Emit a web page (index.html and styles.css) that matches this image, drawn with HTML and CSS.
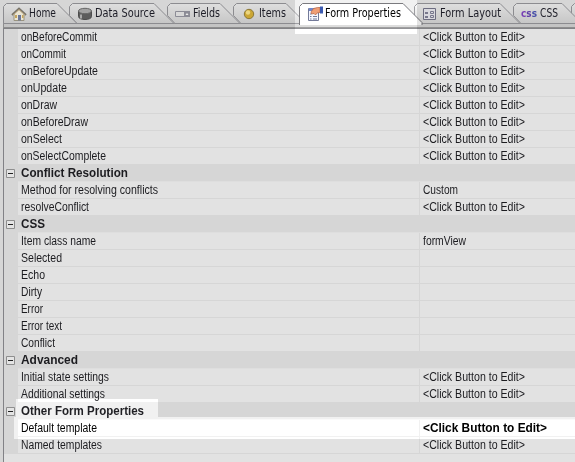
FILE: index.html
```
<!DOCTYPE html>
<html lang="en">
<head>
<meta charset="utf-8">
<title>Form Properties</title>
<link rel="stylesheet" href="styles.css">
</head>
<body>
<svg class="defs" width="0" height="0"><defs><linearGradient id="tabfill" x1="0" y1="0" x2="0" y2="1"><stop offset="0" stop-color="#dedede"/><stop offset="1" stop-color="#c6c6c6"/></linearGradient></defs></svg>
<nav class="tabs" id="tabs"></nav>
<main class="grid" id="grid"></main>
<div class="light light-tab"></div>
<div class="light light-group"></div>
<div class="light light-row"></div>
<script src="app.js"></script>
</body>
</html>
```
FILE: styles.css
```
* { box-sizing: border-box; }
body { margin: 0; width: 575px; height: 462px; overflow: hidden; background: #d6d6d6; font-family: "Liberation Sans", sans-serif; color: #1c1c20; }
.defs { position: absolute; }
.tabs { display: flex; height: 28px; padding-left: 3px; position: relative; z-index: 0; background: #d6d6d6; overflow: hidden; }
.tabs::before { content: ""; position: absolute; left: 3px; right: 0; top: 23px; height: 3px; border: 1px solid #8e8e8e; border-right: 0; background: #c4c4c4; }
.tab { position: relative; flex: none; height: 24px; }
.shape { position: absolute; left: 0; top: 0; overflow: visible; }
.shape path { fill: url(#tabfill); stroke: #8c8c90; stroke-width: 1; }
.tab.active .shape path { fill: #e3e3e3; stroke: #6c6c70; }
.icon { position: absolute; left: 8px; top: 6px; width: 16px; height: 16px; }
.caption { position: absolute; top: 0; left: 26px; }
.caption.shift { left: 27px; }
.label { display: block; margin-top: 5px; overflow: visible; font: 12px "DejaVu Sans Condensed", "DejaVu Sans", sans-serif; font-stretch: condensed; color: #1c1c26; }
.active .label { color: #000; }
.css { position: absolute; top: 0; left: 8px; font-size: 11px; font-weight: bold; }
.grid { margin-left: 3px; height: 434px; border-top: 1px solid #828286; border-left: 1px solid #828286; background: #e2e2e2; }
.row { display: grid; grid-template-columns: 14px 401px 1fr; height: 17px; }
.gutter { background: #d6d6d6; }
.cell { border-bottom: 1px solid #d6d6d6; padding-left: 3px; }
.cell + .cell { border-left: 1px solid #d6d6d6; }
.text { display: block; overflow: visible; font-size: 12px; }
.text text, .label text { fill: currentColor; }
.group { grid-template-columns: 14px 1fr; background: #d6d6d6; }
.group .cell { border-color: #dedede; }
.group text { font-weight: bold; }
.group .gutter { padding: 4px 0 0 2px; }
.toggle { display: block; }
.chosen { color: #000; }
.chosen .cell + .cell text { font-weight: bold; }
.light { position: absolute; z-index: 1; background: #1d1d1d; mix-blend-mode: color-dodge; pointer-events: none; }
.light-tab { left: 295px; top: 0; width: 122px; height: 34px; }
.light-group { left: 16px; top: 399px; width: 142px; height: 18px; }
.light-row { left: 14px; top: 417px; right: 0; height: 22px; }
```
FILE: app.js
```
const icons = {
  home: '<path d="M3 8v6.500h10V8L8 3z" fill="#ebe5d2" stroke="#99937f"/><path d="M7 9h3v5.500H7z" fill="#6d7898"/><path d="M1 9 8 2.500 15 9" fill="none" stroke="#77736a" stroke-width="2"/><path d="M2 9 8 3.500 14 9" fill="none" stroke="#c2a878" stroke-width=".8"/><path d="M4 9h2v3H4zM11 9h1.500v3H11z" fill="#c5a55d"/>',
  data: '<path d="M1.500 5v5.500c0 4 13 4 13 0V5" fill="#5c5c5c" stroke="#4c4c4c"/><ellipse cx="8" cy="5" rx="6.500" ry="2.700" fill="#a2a2a2" stroke="#666"/><path d="M4 8.500v4" stroke="#aaa" stroke-width="2"/>',
  field: '<path d="M.5 5.500h14v5H.5z" fill="#d8d8d8" stroke="#8c8c96"/><path d="M9 5h6v6H9z" fill="#8c8c96"/><path d="m10.500 9 1.500-2 1.500 2z" fill="#eee"/>',
  item: '<circle cx="8" cy="8" r="4.700" fill="#cba634" stroke="#8b7836"/><circle cx="7" cy="6.500" r="2.200" fill="#ecd680"/>',
  form: '<path d="M1.500 2.500h10v12h-10z" fill="#d8dae2" stroke="#666c88"/><path d="M2 2h5v3H2z" fill="#6478b4"/><path d="M3 8h1.500M3 10.500h1.500M3 13h1.500M6 10.500h4M6 13h4" stroke="#666c88"/><path d="M4 6 6.500 2.500l4-1H13v5l-3 .5L8.500 9 7 7.500 4.500 8z" fill="#d48c68" stroke="#a0583c" stroke-width=".7"/><path d="M13 .5h3v7h-3z" fill="#34509c"/>',
  layout: '<path d="M1.500 2.500h12v11h-12z" fill="#d8d8de" stroke="#6c6c80"/><path d="M3 6h3v2H3zM3 10h3v2H3z" fill="#77778c"/><path d="M8.500 5.500h3v2h-3zM8.500 9.500h3v2h-3z" fill="none" stroke="#77778c"/>',
  css: ''
};
// label, tab width, flat top length, icon, label width
const tabs = [
  ['Home', 66, 55, 'home', 27],
  ['Data Source', 98, 86, 'data', 60],
  ['Fields', 66, 54, 'field', 27],
  ['Items', 66, 54, 'item', 27],
  ['Form Properties', 115, 105, 'form', 76],
  ['Form Layout', 99, 87, 'layout', 61],
  ['CSS', 58, 50, 'css', 18],
  ['', 60, 50, 'css', 1]
];
const fit = (s, cls, y, w) => `<svg class="${cls}" width="${w}" height="16"><text x="0" y="${y}" textLength="${w}" lengthAdjust="spacingAndGlyphs">${s.replace(/</g, '&lt;')}</text></svg>`;
const outline = (i, top) => i === 4
  ? `M.5 25V6.500L3.500 3.500H${top - 1}L${top + 18} 22.500V25`
  : `M.5 ${i ? 15.5 : 23.5}V6.500L3.500 3.500H${top - 1}L${top + 19} 23.500${i ? 'H8L.5 15.5' : 'H.5'}`;
document.getElementById('tabs').innerHTML = tabs.map(([name, w, top, icon, lw], i) => `<div class="tab${i === 4 ? ' active' : ''}" style="width:${w}px;z-index:${i === 4 ? 20 : 10 - i}">
<svg class="shape" width="${w}" height="24"><path d="${outline(i, top)}"/></svg>
<svg class="icon" viewBox="0 0 16 16">${icons[icon]}</svg>
${i === 6 ? '<svg class="label css" width="16" height="16"><text y="12" textLength="16" lengthAdjust="spacingAndGlyphs"><tspan fill="#7840b4">c</tspan><tspan fill="#6040a8">s</tspan><tspan fill="#4850a8">s</tspan></text></svg>' : ''}
${name ? `<div class="caption${i === 6 ? ' shift' : ''}">${fit(name, 'label', 12, lw)}</div>` : ''}</div>`).join('');
const E = '<Click Button to Edit>';
const rows = [
  ['onBeforeCommit', 76, E], ['onCommit', 45, E], ['onBeforeUpdate', 77, E], ['onUpdate', 46, E],
  ['onDraw', 36, E], ['onBeforeDraw', 67, E], ['onSelect', 41, E], ['onSelectComplete', 85, E],
  ['Conflict Resolution', 107], ['Method for resolving conflicts', 137, 'Custom', 35], ['resolveConflict', 68, E],
  ['CSS', 24], ['Item class name', 75, 'formView', 43], ['Selected', 41, ''], ['Echo', 24, ''], ['Dirty', 21, ''],
  ['Error', 22, ''], ['Error text', 41, ''], ['Conflict', 34, ''],
  ['Advanced', 57], ['Initial state settings', 88, E], ['Additional settings', 84, E],
  ['Other Form Properties', 123], ['Default template', 76, E], ['Named templates', 81, E]
];
document.getElementById('grid').innerHTML = rows.map(([s, w, v, vw], i) => {
  const group = v === undefined;
  const toggle = '<svg class="toggle" width="9" height="9"><path d="M.5.5h8v8h-8z" fill="#e4e4e4" stroke="#8e8e8e"/><path d="M2 4.500h5" stroke="#222"/></svg>';
  const value = group ? '' : `<div class="cell">${v ? fit(v, 'text', 12, i === 23 ? 124 : vw || 102) : ''}</div>`;
  return `<div class="row${group ? ' group' : ''}${i === 23 ? ' chosen' : ''}"><div class="gutter">${group ? toggle : ''}</div><div class="cell">${fit(s, 'text', 12, w)}</div>${value}</div>`;
}).join('');
```
